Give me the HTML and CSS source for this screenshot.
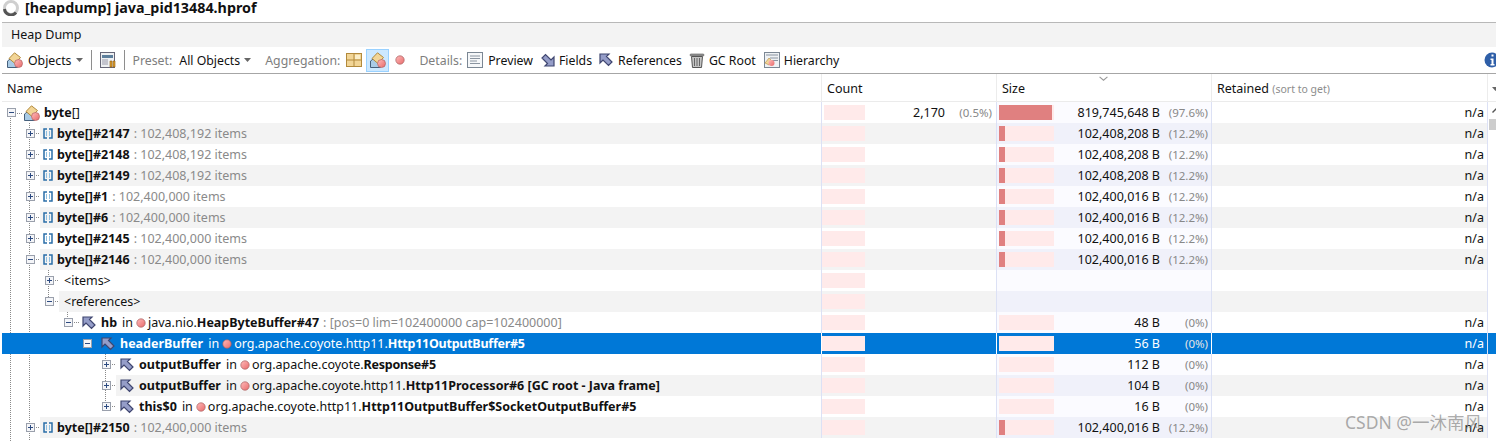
FILE: index.html
```html
<!DOCTYPE html>
<html lang="en">
<head>
  <meta charset="UTF-8">
  <title>[heapdump] java_pid13484.hprof</title>
  <link rel="stylesheet" href="styles.css">
</head>
<body>

<!-- shared icons -->
<svg class="defs" width="0" height="0">
  <defs>
    <linearGradient id="ballFill" x1="0" y1="0" x2="1" y2="1">
      <stop offset="0" stop-color="#fbb"/>
      <stop offset="1" stop-color="#e86a6a"/>
    </linearGradient>
    <symbol id="i-ball" viewBox="0 0 10 10">
      <circle cx="5" cy="5" r="4.2" fill="url(#ballFill)" stroke="#a86060" stroke-width=".7"/>
    </symbol>
    <symbol id="i-obj" viewBox="0 0 16 16">
      <path d="M.5 15.500V9l4-3h6v9.500z" fill="#a9cbe6" stroke="#46607c"/>
      <path d="M2 6.500 7.500.8 13.500 5.500 8 11.500z" fill="#f2d596" stroke="#b28a3c"/>
      <circle cx="11.500" cy="11.500" r="4" fill="url(#ballFill)" stroke="#b06464" stroke-width=".7"/>
    </symbol>
    <symbol id="i-arr" viewBox="0 0 10 11">
      <path d="M4 1H1v9h3M6 1h3v9H6" fill="none" stroke="#2a6ea8" stroke-width="1.5"/>
      <path d="M3.500 3v5M6.500 3v5" stroke="#8fbfe0"/>
    </symbol>
    <symbol id="i-ref" viewBox="0 0 14 14">
      <path d="M1 1h9L7.500 3.500 13 9l-3.500 3.500L4 7 1 10z" fill="#959dc8" stroke="#3f4670" stroke-width="1.2"/>
    </symbol>
    <symbol id="i-field" viewBox="0 0 14 14">
      <path d="M13 13H4l2.500-2.500L1 5l3.500-3.500L10 7l3-3z" fill="#959dc8" stroke="#3f4670" stroke-width="1.2"/>
    </symbol>
    <symbol id="i-plus" viewBox="0 0 9 9">
      <rect x=".5" y=".5" width="8" height="8" fill="#f4f5f8" stroke="#9aa0ac"/>
      <path d="M2 4.500h5M4.500 2v5" stroke="#2c4a80"/>
    </symbol>
    <symbol id="i-minus" viewBox="0 0 9 9">
      <rect x=".5" y=".5" width="8" height="8" fill="#f4f5f8" stroke="#9aa0ac"/>
      <path d="M2 4.500h5" stroke="#2c4a80"/>
    </symbol>
    <symbol id="i-caret" viewBox="0 0 7 4">
      <path d="M0 0h7L3.500 4z" fill="#666"/>
    </symbol>
  </defs>
</svg>

<div class="title">
  <svg class="spinner" width="16" height="16" viewBox="0 0 16 16">
    <circle cx="8" cy="8" r="6.500" fill="none" stroke="#cfcfcf" stroke-width="3"/>
    <path d="M1.500 9A6.500 6.500 0 0 0 13 12.500" fill="none" stroke="#555" stroke-width="3"/>
  </svg>
  <span>[heapdump] java_pid13484.hprof</span>
</div>

<div class="tabbar">Heap Dump</div>

<div class="toolbar">
  <svg class="ico-16 first"><use href="#i-obj"/></svg>
  <span class="tool-text objects">Objects</span>
  <svg class="caret"><use href="#i-caret"/></svg>
  <span class="sep sep-a"></span>
  <svg class="ico-16" viewBox="0 0 16 16">
    <rect x=".5" y=".5" width="14" height="15" fill="#eef0f2" stroke="#667"/>
    <rect x="2" y="3" width="11" height="3" fill="#5d7f9c"/>
    <path d="M2 8h6M2 10h6M2 12h6" stroke="#99a"/>
    <path d="M10 9h2v6h-2zM13 9h2v6h-2z" fill="#e0a030" stroke="#8a5a10" stroke-width=".6"/>
  </svg>
  <span class="sep sep-b"></span>
  <span class="tool-label preset">Preset:</span>
  <span class="tool-text all-objects">All Objects</span>
  <svg class="caret"><use href="#i-caret"/></svg>
  <span class="tool-label aggregation">Aggregation:</span>
  <svg class="ico-16 agg-classes" viewBox="0 0 16 16">
    <rect x=".5" y="1.500" width="15" height="13" fill="#f2d596" stroke="#b28a3c"/>
    <path d="M8 2v12M1 8h14" stroke="#b28a3c"/>
    <rect x="9" y="3" width="5" height="4" fill="#fbeec8"/>
  </svg>
  <span class="tool-active"><svg class="ico-16"><use href="#i-obj"/></svg></span>
  <svg class="ico-ball agg-ball"><use href="#i-ball"/></svg>
  <span class="tool-label details">Details:</span>
  <svg class="ico-16" viewBox="0 0 16 16">
    <rect x=".5" y=".5" width="15" height="15" fill="#f5f7f9" stroke="#7b8794"/>
    <path d="M3 4h10M3 6.500h10M3 9h7M3 11.500h10" stroke="#8a94a0"/>
  </svg>
  <span class="tool-text preview">Preview</span>
  <svg class="ico-14 fields-ico"><use href="#i-field"/></svg>
  <span class="tool-text fields">Fields</span>
  <svg class="ico-14 refs-ico"><use href="#i-ref"/></svg>
  <span class="tool-text references">References</span>
  <svg class="ico-16 trash-ico" viewBox="0 0 16 16">
    <rect x="1" y="2" width="14" height="2" rx="1" fill="#999" stroke="#555" stroke-width=".6"/>
    <path d="M2.500 4.500h11l-1 11h-9z" fill="#c4c4c4" stroke="#555"/>
    <path d="M5.500 6v8M8 6v8M10.500 6v8" stroke="#666"/>
  </svg>
  <span class="tool-text gcroot">GC Root</span>
  <svg class="ico-16 hier-ico" viewBox="0 0 16 16">
    <rect x=".5" y=".5" width="15" height="15" fill="#eef1f4" stroke="#7b8794"/>
    <path d="M2 3h12M6 6h8M6 8.500h8" stroke="#8a94a0"/>
    <path d="M1 11l4-5 3 3-3 4z" fill="#f2d596" stroke="#b28a3c" stroke-width=".6"/>
    <circle cx="7.500" cy="11" r="3" fill="url(#ballFill)"/>
  </svg>
  <span class="tool-text hierarchy">Hierarchy</span>
  <svg class="info" viewBox="0 0 16 16">
    <circle cx="8" cy="8" r="7.500" fill="#2f5fa8"/>
    <path d="M6.500 6.500h3V12h1v1.500h-4V12h1V8h-1zM7.500 2.500h2v2h-2z" fill="#fff"/>
  </svg>
</div>

<div class="table-head">
  <div class="th">Name</div>
  <div class="th">Count</div>
  <div class="th th-size">Size<svg class="sort" viewBox="0 0 8 4"><path d="M.5.500 4 3.500 7.500.5" fill="none" stroke="#999"/></svg></div>
  <div class="th">Retained <small>(sort to get)</small></div>
  <svg class="head-menu" viewBox="0 0 7 4"><use href="#i-caret"/></svg>
</div>

<div class="table-body">
  <!-- tree guides run behind the rows -->
  <svg class="guides" width="120" height="339">
    <g stroke="#8a8a8a" stroke-dasharray="1 1" fill="none">
      <path d="M10.500 16V339M29.500 21V339M48.500 168V204M67.500 208V222M86.500 231V238M105.500 246V310"/>
      <path d="M15 11.500H23M34 31.500H40M34 52.500H40M34 73.500H40M34 94.500H40M34 115.500H40M34 136.500H40M34 157.500H40M53 178.500H59M53 199.500H59M72 220.500H80M91 241.500H99M110 262.500H116M110 283.500H116M110 304.500H116M34 325.500H40"/>
    </g>
  </svg>

  <div class="row root-row">
    <div class="name-cell d0">
      <svg class="exp"><use href="#i-minus"/></svg>
      <div class="label root-label"><svg class="ico-16"><use href="#i-obj"/></svg><b>byte</b><span class="br">[]</span></div>
    </div>
    <div class="count-cell"><span class="bar"></span><span class="num">2,170</span><span class="pct">(0.5%)</span></div>
    <div class="size-cell"><span class="bar"><i class="fill fill-big"></i></span><span class="num">819,745,648 B</span><span class="pct">(97.6%)</span></div>
    <div class="ret-cell">n/a</div>
  </div>

  <div class="row odd">
    <div class="name-cell d1">
      <svg class="exp"><use href="#i-plus"/></svg>
      <div class="label"><svg class="ico-arr"><use href="#i-arr"/></svg><b>byte[]#2147</b><span class="dim">: 102,408,192 items</span></div>
    </div>
    <div class="count-cell"><span class="bar"></span></div>
    <div class="size-cell"><span class="bar"><i class="fill"></i></span><span class="num">102,408,208 B</span><span class="pct">(12.2%)</span></div>
    <div class="ret-cell">n/a</div>
  </div>

  <div class="row">
    <div class="name-cell d1">
      <svg class="exp"><use href="#i-plus"/></svg>
      <div class="label"><svg class="ico-arr"><use href="#i-arr"/></svg><b>byte[]#2148</b><span class="dim">: 102,408,192 items</span></div>
    </div>
    <div class="count-cell"><span class="bar"></span></div>
    <div class="size-cell"><span class="bar"><i class="fill"></i></span><span class="num">102,408,208 B</span><span class="pct">(12.2%)</span></div>
    <div class="ret-cell">n/a</div>
  </div>

  <div class="row odd">
    <div class="name-cell d1">
      <svg class="exp"><use href="#i-plus"/></svg>
      <div class="label"><svg class="ico-arr"><use href="#i-arr"/></svg><b>byte[]#2149</b><span class="dim">: 102,408,192 items</span></div>
    </div>
    <div class="count-cell"><span class="bar"></span></div>
    <div class="size-cell"><span class="bar"><i class="fill"></i></span><span class="num">102,408,208 B</span><span class="pct">(12.2%)</span></div>
    <div class="ret-cell">n/a</div>
  </div>

  <div class="row">
    <div class="name-cell d1">
      <svg class="exp"><use href="#i-plus"/></svg>
      <div class="label"><svg class="ico-arr"><use href="#i-arr"/></svg><b>byte[]#1</b><span class="dim">: 102,400,000 items</span></div>
    </div>
    <div class="count-cell"><span class="bar"></span></div>
    <div class="size-cell"><span class="bar"><i class="fill"></i></span><span class="num">102,400,016 B</span><span class="pct">(12.2%)</span></div>
    <div class="ret-cell">n/a</div>
  </div>

  <div class="row odd">
    <div class="name-cell d1">
      <svg class="exp"><use href="#i-plus"/></svg>
      <div class="label"><svg class="ico-arr"><use href="#i-arr"/></svg><b>byte[]#6</b><span class="dim">: 102,400,000 items</span></div>
    </div>
    <div class="count-cell"><span class="bar"></span></div>
    <div class="size-cell"><span class="bar"><i class="fill"></i></span><span class="num">102,400,016 B</span><span class="pct">(12.2%)</span></div>
    <div class="ret-cell">n/a</div>
  </div>

  <div class="row">
    <div class="name-cell d1">
      <svg class="exp"><use href="#i-plus"/></svg>
      <div class="label"><svg class="ico-arr"><use href="#i-arr"/></svg><b>byte[]#2145</b><span class="dim">: 102,400,000 items</span></div>
    </div>
    <div class="count-cell"><span class="bar"></span></div>
    <div class="size-cell"><span class="bar"><i class="fill"></i></span><span class="num">102,400,016 B</span><span class="pct">(12.2%)</span></div>
    <div class="ret-cell">n/a</div>
  </div>

  <div class="row odd">
    <div class="name-cell d1">
      <svg class="exp"><use href="#i-minus"/></svg>
      <div class="label"><svg class="ico-arr"><use href="#i-arr"/></svg><b>byte[]#2146</b><span class="dim">: 102,400,000 items</span></div>
    </div>
    <div class="count-cell"><span class="bar"></span></div>
    <div class="size-cell"><span class="bar"><i class="fill"></i></span><span class="num">102,400,016 B</span><span class="pct">(12.2%)</span></div>
    <div class="ret-cell">n/a</div>
  </div>

  <div class="row">
    <div class="name-cell d2">
      <svg class="exp"><use href="#i-plus"/></svg>
      <div class="label">&lt;items&gt;</div>
    </div>
    <div class="count-cell"><span class="bar"></span></div>
    <div class="size-cell"></div>
    <div class="ret-cell"></div>
  </div>

  <div class="row odd">
    <div class="name-cell d2">
      <svg class="exp"><use href="#i-minus"/></svg>
      <div class="label">&lt;references&gt;</div>
    </div>
    <div class="count-cell"><span class="bar"></span></div>
    <div class="size-cell"></div>
    <div class="ret-cell"></div>
  </div>

  <div class="row">
    <div class="name-cell d3">
      <svg class="exp"><use href="#i-minus"/></svg>
      <div class="label"><svg class="ico-ref"><use href="#i-ref"/></svg><b>hb</b><span class="in">in</span><svg class="ico-ball"><use href="#i-ball"/></svg><span>java.nio.<b>HeapByteBuffer#47</b></span><span class="dim">: [pos=0 lim=102400000 cap=102400000]</span></div>
    </div>
    <div class="count-cell"><span class="bar"></span></div>
    <div class="size-cell"><span class="bar"></span><span class="num">48 B</span><span class="pct">(0%)</span></div>
    <div class="ret-cell">n/a</div>
  </div>

  <div class="row selected">
    <div class="name-cell d4">
      <svg class="exp"><use href="#i-minus"/></svg>
      <div class="label"><svg class="ico-ref"><use href="#i-ref"/></svg><b>headerBuffer</b><span class="in">in</span><svg class="ico-ball"><use href="#i-ball"/></svg><span>org.apache.coyote.http11.<b class="tight">Http11OutputBuffer#5</b></span></div>
    </div>
    <div class="count-cell"><span class="bar"></span></div>
    <div class="size-cell"><span class="bar"></span><span class="num">56 B</span><span class="pct">(0%)</span></div>
    <div class="ret-cell">n/a</div>
  </div>

  <div class="row">
    <div class="name-cell d5">
      <svg class="exp"><use href="#i-plus"/></svg>
      <div class="label"><svg class="ico-ref"><use href="#i-ref"/></svg><b>outputBuffer</b><span class="in">in</span><svg class="ico-ball"><use href="#i-ball"/></svg><span>org.apache.coyote.<b class="tight">Response#5</b></span></div>
    </div>
    <div class="count-cell"><span class="bar"></span></div>
    <div class="size-cell"><span class="bar"></span><span class="num">112 B</span><span class="pct">(0%)</span></div>
    <div class="ret-cell">n/a</div>
  </div>

  <div class="row odd">
    <div class="name-cell d5">
      <svg class="exp"><use href="#i-plus"/></svg>
      <div class="label"><svg class="ico-ref"><use href="#i-ref"/></svg><b>outputBuffer</b><span class="in">in</span><svg class="ico-ball"><use href="#i-ball"/></svg><span>org.apache.coyote.http11.<b>Http11Processor#6 [GC root - Java frame]</b></span></div>
    </div>
    <div class="count-cell"><span class="bar"></span></div>
    <div class="size-cell"><span class="bar"></span><span class="num">104 B</span><span class="pct">(0%)</span></div>
    <div class="ret-cell">n/a</div>
  </div>

  <div class="row">
    <div class="name-cell d5">
      <svg class="exp"><use href="#i-plus"/></svg>
      <div class="label"><svg class="ico-ref"><use href="#i-ref"/></svg><b>this$0</b><span class="in">in</span><svg class="ico-ball"><use href="#i-ball"/></svg><span>org.apache.coyote.http11.<b>Http11OutputBuffer$SocketOutputBuffer#5</b></span></div>
    </div>
    <div class="count-cell"><span class="bar"></span></div>
    <div class="size-cell"><span class="bar"></span><span class="num">16 B</span><span class="pct">(0%)</span></div>
    <div class="ret-cell">n/a</div>
  </div>

  <div class="row odd">
    <div class="name-cell d1">
      <svg class="exp"><use href="#i-plus"/></svg>
      <div class="label"><svg class="ico-arr"><use href="#i-arr"/></svg><b>byte[]#2150</b><span class="dim">: 102,400,000 items</span></div>
    </div>
    <div class="count-cell"><span class="bar"></span></div>
    <div class="size-cell"><span class="bar"><i class="fill"></i></span><span class="num">102,400,016 B</span><span class="pct">(12.2%)</span></div>
    <div class="ret-cell">n/a</div>
  </div>

  <div class="scrollbar">
    <svg class="scroll-up" viewBox="0 0 8 5"><path d="M.5 4.500 4 1l3.500 3.500" fill="none" stroke="#555" stroke-width="1.4"/></svg>
    <div class="scroll-thumb"></div>
  </div>
</div>

<div class="watermark">CSDN @一沐南风</div>

</body>
</html>
```

FILE: styles.css
```css
html, body {
  margin: 0;
  padding: 0;
  height: 441px;
  overflow: hidden;
  background: #fff;
}

body {
  position: relative;
  font-family: "Noto Sans", "Noto Sans CJK SC", sans-serif;
  font-size: 12.5px;
  color: #111;
}

.defs {
  position: absolute;
}

/* title */
.title {
  display: flex;
  align-items: center;
  padding: 0 0 7px 3px;
  box-sizing: border-box;
  height: 22px;
  font-size: 14.3px;
  font-weight: 700;
}

.spinner {
  margin-right: 6px;
}

.tabbar {
  margin-left: 2px;
  height: 25px;
  line-height: 23px;
  padding-left: 9px;
  box-sizing: border-box;
  border-top: 1px solid #b8b8b8;
  background: #f3f3f3;
}

/* toolbar */
.toolbar {
  position: relative;
  margin-left: 2px;
  height: 27px;
  box-sizing: border-box;
  border-bottom: 1px solid #a6a6a6;
  display: flex;
  align-items: center;
  font-size: 12.3px;
}

.toolbar svg {
  flex: none;
}

.ico-16 {
  width: 16px;
  height: 16px;
}

.ico-14 {
  width: 14px;
  height: 14px;
}

.ico-ball {
  width: 10px;
  height: 10px;
}

.first {
  margin-left: 5px;
}

.caret {
  width: 7px;
  height: 4px;
  margin-left: 4px;
}

.sep {
  width: 1px;
  height: 20px;
  background: #8e8e8e;
}

.sep-a {
  margin: 0 8px;
}

.sep-b {
  margin: 0 8px;
}

.tool-label {
  color: #7e7e7e;
}

.tool-text {
  margin-left: 5px;
}

.objects {
  margin-left: 5px;
}

.preset {
  margin-right: 7px;
}

.all-objects {
  margin-left: 0;
}

.aggregation {
  margin-left: 14px;
}

.agg-classes {
  margin-left: 6px;
}

.tool-active {
  display: flex;
  align-items: center;
  justify-content: center;
  width: 23px;
  height: 23px;
  box-sizing: border-box;
  margin-left: 4px;
  background: #cce8ff;
  border: 1px solid #99d1ff;
}

.agg-ball {
  margin-left: 6px;
}

.details {
  margin: 0 5px 0 14px;
}

.preview {
  margin-left: 5px;
}

.fields-ico {
  margin-left: 8px;
}

.fields {
  margin-left: 4px;
}

.refs-ico {
  margin-left: 7px;
}

.trash-ico {
  margin-left: 7px;
}

.gcroot {
  margin-left: 4px;
}

.hier-ico {
  margin-left: 8px;
}

.hierarchy {
  margin-left: 4px;
}

.info {
  width: 16px;
  height: 16px;
  margin-left: auto;
  margin-right: -4px;
}

/* table */
.table-head,
.row {
  display: grid;
  grid-template-columns: 820px 175px 215px 276px;
  margin-left: 2px;
}

.table-head {
  position: relative;
  height: 28px;
  box-sizing: border-box;
  border-bottom: 1px solid #ebebeb;
}

.th {
  position: relative;
  padding: 2px 0 0 5px;
  line-height: 25px;
  border-right: 1px solid #ececec;
}

.th small {
  font-size: 10.5px;
  color: #8c8c8c;
}

.sort {
  position: absolute;
  left: 102px;
  top: 2px;
  width: 9px;
  height: 5px;
}

.head-menu {
  position: absolute;
  right: -3px;
  top: 13px;
  width: 7px;
  height: 4px;
}

.table-body {
  position: relative;
}

.guides {
  position: absolute;
  left: 0;
  top: 0;
}

.row {
  position: relative;
  height: 21px;
  line-height: 21px;
}

.name-cell {
  display: flex;
  align-items: center;
  border-right: 1px solid #dce1f5;
}

.exp {
  flex: none;
  width: 9px;
  height: 9px;
  margin-right: 5px;
}

.d0 { padding-left: 5px; }
.d1 { padding-left: 24px; }
.d2 { padding-left: 43px; }
.d3 { padding-left: 62px; }
.d4 { padding-left: 81px; }
.d5 { padding-left: 100px; }

.label {
  flex: 1;
  display: flex;
  align-items: center;
  height: 21px;
  padding-left: 5px;
  white-space: pre;
}

.root-label {
  padding-left: 3px;
}

.root-label b {
  margin-left: 4px;
}

.br {
  font-weight: 400;
}

.ico-arr {
  flex: none;
  width: 10px;
  height: 11px;
  margin: 0 4px 0 -2px;
}

.ico-ref {
  flex: none;
  width: 14px;
  height: 14px;
  margin: 0 5px 0 -1px;
}

.label .ico-ball {
  flex: none;
  margin-right: 2px;
}

.in {
  margin: 0 3px 0 5px;
}

.dim {
  margin-left: 4px;
  color: #8a8a8a;
}

.tight {
  letter-spacing: -0.25px;
}

.count-cell,
.size-cell {
  display: flex;
  align-items: center;
  border-right: 1px solid #dce1f5;
}

.bar {
  flex: none;
  display: block;
  width: 43px;
  height: 15px;
  background: #ffeaea;
}

.root-row .count-cell .bar {
  width: 41px;
  margin-left: 2px;
}

.count-cell .num {
  width: 80px;
  text-align: right;
}

.count-cell .pct {
  width: 47px;
  text-align: right;
}

.size-cell {
  background: #fbfbff;
}

.size-cell .bar {
  width: 55px;
  margin-left: 2px;
}

.fill {
  display: block;
  width: 6px;
  height: 15px;
  background: #e08080;
}

.fill-big {
  width: 53px;
}

.size-cell .num {
  width: 106px;
  text-align: right;
}

.size-cell .pct {
  width: 48px;
  text-align: right;
}

.pct {
  font-size: 11.5px;
  color: #888;
}

.ret-cell {
  text-align: right;
  padding-right: 3px;
  border-right: 1px solid #dce1f5;
}

/* stripes */
.odd .label,
.odd .count-cell,
.odd .ret-cell {
  background: #f3f3f3;
}

.odd .size-cell {
  background: #f0f1fa;
}

/* selected row */
.selected {
  background: #0078d7;
  color: #fff;
}

.selected .size-cell {
  background: transparent;
}

.selected .name-cell,
.selected .count-cell,
.selected .size-cell {
  border-right-color: #fff;
}

.selected .pct {
  color: #e4e4e4;
}

.scrollbar {
  position: absolute;
  left: 1489px;
  top: 0;
  width: 7px;
  overflow: hidden;
}

.scroll-up {
  display: block;
  width: 8px;
  height: 5px;
  margin: 6px 0 6px 3px;
}

.scroll-thumb {
  width: 7px;
  height: 11px;
  background: #cdcdcd;
}

.watermark {
  position: absolute;
  left: 1345px;
  top: 409px;
  font-size: 17.5px;
  color: rgba(120, 120, 120, 0.62);
  white-space: nowrap;
}
```
